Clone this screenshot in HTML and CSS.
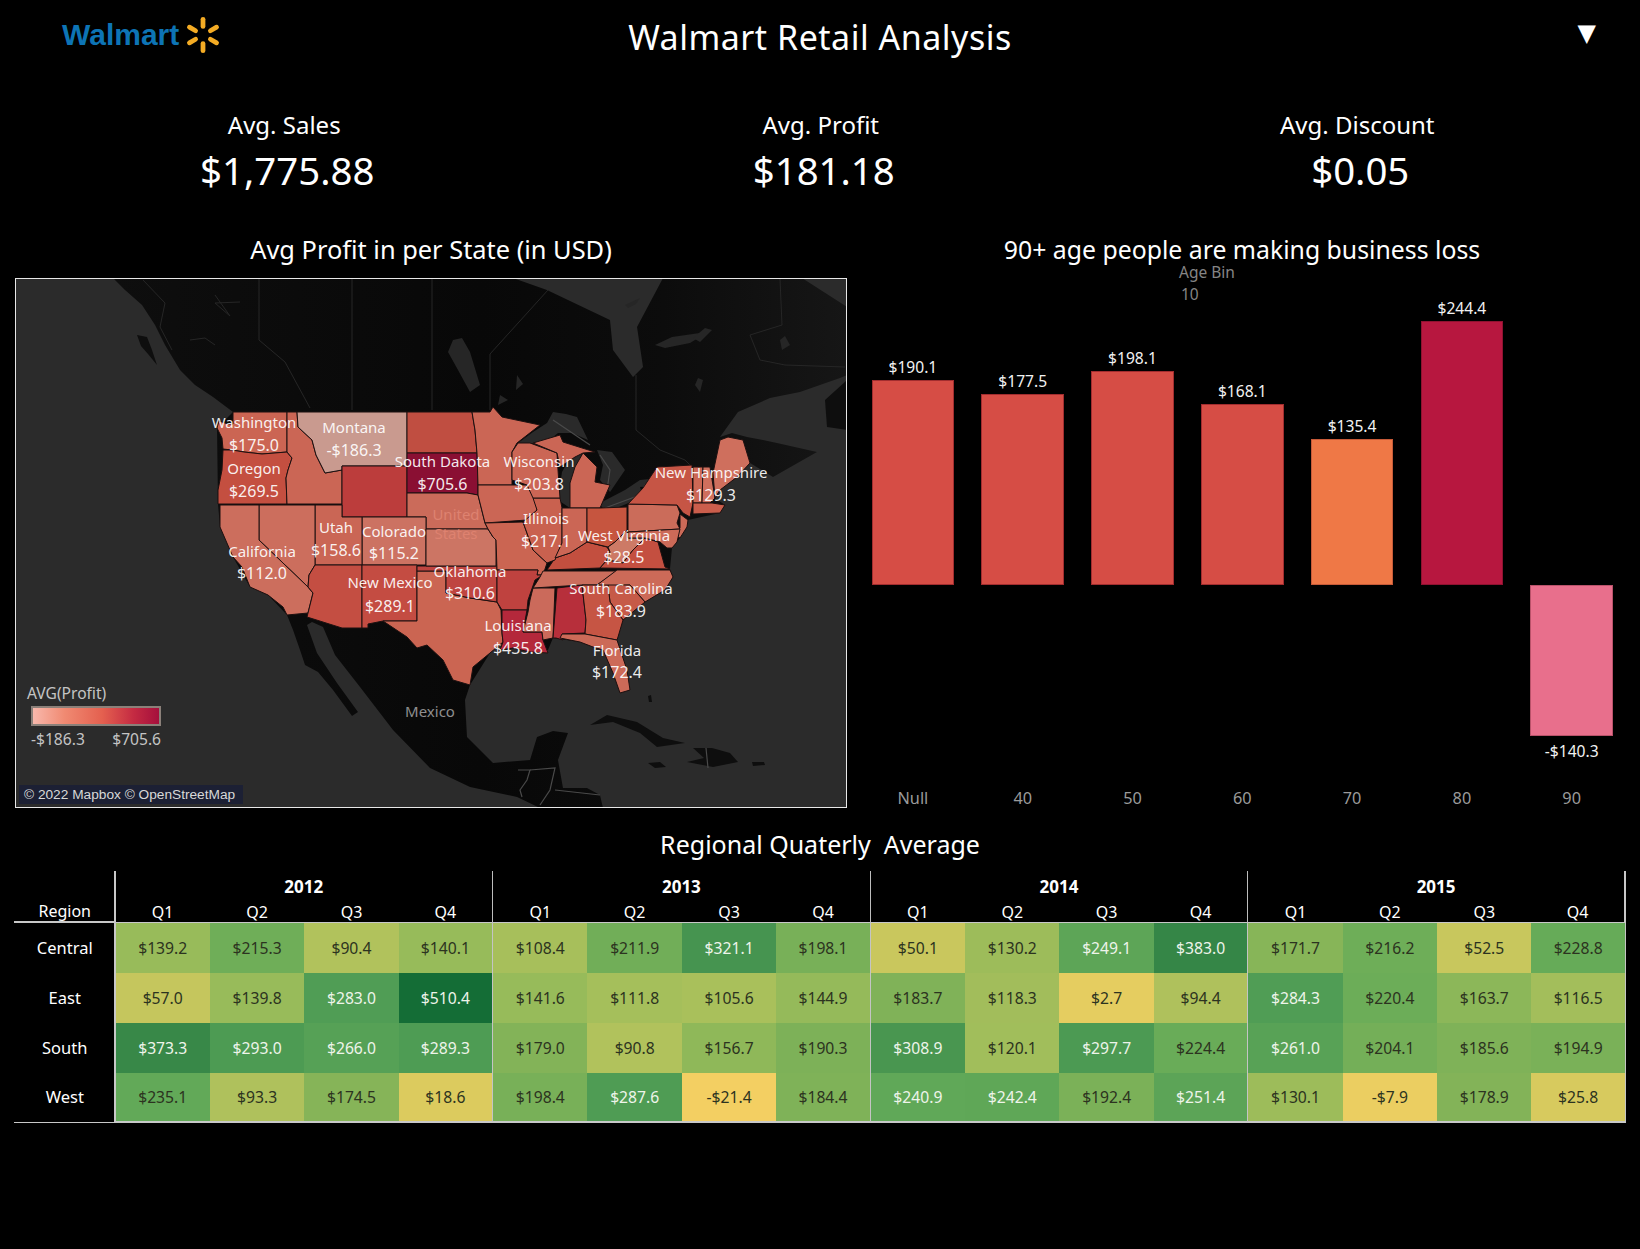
FILE: index.html
```html
<!DOCTYPE html>
<html lang="en">
<head>
<meta charset="utf-8">
<title>Walmart Retail Analysis</title>
<link rel="stylesheet" href="styles.css">
</head>
<body>
<div class="page">
  <header class="top">
    <div class="logo">
      <span class="logo-word">Walmart</span>
      <svg class="spark" viewBox="-20 -20 40 40" aria-hidden="true">
        <g fill="#f3ab24">
          <rect x="-2.5" y="-19" width="5" height="12.5" rx="2.5"/>
          <rect x="-2.5" y="-19" width="5" height="12.5" rx="2.5" transform="rotate(60)"/>
          <rect x="-2.5" y="-19" width="5" height="12.5" rx="2.5" transform="rotate(120)"/>
          <rect x="-2.5" y="-19" width="5" height="12.5" rx="2.5" transform="rotate(180)"/>
          <rect x="-2.5" y="-19" width="5" height="12.5" rx="2.5" transform="rotate(240)"/>
          <rect x="-2.5" y="-19" width="5" height="12.5" rx="2.5" transform="rotate(300)"/>
        </g>
      </svg>
    </div>
    <h1 class="main-title">Walmart Retail Analysis</h1>
    <div class="menu-arrow">▼</div>
  </header>

  <section class="kpis">
    <div class="kpi"><div class="kpi-label">Avg. Sales</div><div class="kpi-value">$1,775.88</div></div>
    <div class="kpi"><div class="kpi-label">Avg. Profit</div><div class="kpi-value">$181.18</div></div>
    <div class="kpi"><div class="kpi-label">Avg. Discount</div><div class="kpi-value">$0.05</div></div>
  </section>

  <section class="mid">
    <div class="map-panel">
      <h2 class="panel-title map-title">Avg Profit in per State (in USD)</h2>
      <div class="map">
        <svg class="map-svg" viewBox="16 279 830 528" preserveAspectRatio="none" aria-label="Map of average profit per US state">
          <defs>
            <linearGradient id="landShade" x1="0" y1="0" x2="1" y2="0">
              <stop offset="0" stop-color="#0e0e0e"/>
              <stop offset="0.5" stop-color="#080808"/>
              <stop offset="0.75" stop-color="#0c0c0c"/>
              <stop offset="1" stop-color="#161616"/>
            </linearGradient>
          </defs>
          <rect x="16" y="279" width="830" height="528" fill="#2b2b2b"/>
          <!-- land -->
          <path fill="url(#landShade)" d="M113,278 L125,290 L142,305 L155,325 L165,345 L180,370 L195,385 L213,397 L233,412 L217,428 L218,504 L220,527 L233,557 L250,587 L268,595 L287,615 L293,630 L300,650 L305,665 L318,672 L333,690 L352,716 L358,712 L337,683 L317,653 L307,625 L312,622 L323,627 L335,655 L360,687 L393,730 L430,768 L470,787 L517,797 L540,808 L603,808 L600,795 L587,788 L563,788 L558,760 L568,733 L553,731 L537,737 L530,760 L493,763 L467,737 L465,700 L470,685 L490,653 L503,642 L530,650 L548,650 L553,638 L580,642 L593,647 L603,650 L613,673 L620,693 L630,690 L627,670 L617,640 L623,620 L645,602 L665,590 L673,577 L670,569 L672,548 L680,538 L688,520 L720,513 L725,505 L715,498 L720,490 L737,477 L750,463 L773,477 L817,452 L777,443 L763,440 L747,437 L732,433 L720,437 L738,412 L770,398 L800,392 L840,378 L847,375 L847,307 L802,278 L663,278 L637,327 L643,367 L633,377 L613,350 L610,320 L547,290 L513,278 Z"/>
          <path class="land-bit" d="M137,335 L147,337 L152,350 L157,365 L148,354 L141,346 Z"/>
          <path class="land-bit" d="M847,380 L825,400 L827,427 L847,430 Z"/>
          <path class="land-bit" d="M590,725 L607,715 L637,722 L663,738 L685,743 L657,747 L640,733 L613,722 Z"/>
          <path class="land-bit" d="M693,748 L712,748 L730,753 L738,762 L713,767 L687,762 L704,758 Z"/>
          <path class="land-bit" d="M648,763 L660,762 L666,767 L655,768 Z"/>
          <path class="land-bit" d="M752,762 L764,762 L765,765 L753,766 Z"/>
          <path class="land-bit" d="M648,696 L651,695 L652,702 L649,702 Z"/>
          <!-- lakes -->
          <g fill="#2a2a2a">
            <path d="M518,443 L533,432 L547,423 L553,412 L566,414 L577,417 L588,440 L572,433 L558,433 L543,445 L533,443 Z"/>
            <path d="M558,500 L570,508 L575,493 L573,473 L585,455 L573,452 L562,472 Z"/>
            <path d="M597,450 L612,452 L625,470 L610,492 L600,480 L603,465 Z"/>
            <path d="M600,505 L607,512 L643,497 L640,487 L667,485 L668,477 L640,480 L625,490 L600,503 Z"/>
          </g>
          <g fill="#262626">
            <path d="M453,340 L462,338 L470,352 L480,385 L470,392 L458,370 L448,352 Z"/>
            <path d="M655,345 L672,337 L700,333 L708,332 L690,343 L665,348 Z"/>
            <path d="M625,305 L640,298 L636,304 L628,308 Z"/>
            <path d="M693,338 L705,328 L712,330 L700,342 Z"/>
            <path d="M695,385 L698,378 L703,380 L700,392 Z"/>
            <path d="M780,340 L785,336 L790,345 L782,350 Z"/>
            <path d="M517,375 L523,384 L516,390 Z"/>
            <path d="M500,395 L508,400 L498,405 Z"/>
          </g>
          <!-- faint political and river lines -->
          <g class="faint">
            <path d="M259,279 L259,340 L285,362 L310,408"/>
            <path d="M352,279 L352,410"/>
            <path d="M432,279 L432,410"/>
            <path d="M490,410 L490,354 L548,290"/>
            <path d="M636,375 L636,430 L660,450 L685,460 L690,465"/>
            <path d="M780,279 L782,325 L750,335 L760,360 L785,365 L845,367"/>
            <path d="M215,295 L230,316 L215,303 L240,302"/>
            <path d="M190,340 L205,338 L215,345"/>
            <path d="M143,280 L165,303 L160,327 L172,350"/>
          </g>
          <g class="bright-line">
            <path d="M553,420 L590,445"/>
            <path d="M600,455 L610,470 L607,490"/>
            <path d="M605,508 L640,495 L645,485 L665,480"/>
            <path d="M518,770 L530,770 L527,780 L520,790 L522,797"/>
            <path d="M530,770 L555,768 L550,790 L540,805"/>
            <path d="M555,790 L600,795"/>
            <path d="M706,748 L708,768"/>
          </g>

          <!-- states -->
          <g class="states">
            <path fill="#cb6553" d="M233,412 L287,412 L287,452 L262,454 L244,452 L232,450 L223,449 L222,438 L217,428 L219,421 L228,424 L233,424 Z"/>
            <path fill="#c44f40" d="M223,450 L232,450 L244,452 L262,454 L287,452 L292,458 L288,470 L286,478 L287,504 L218,504 L218,490 L222,470 Z"/>
            <path fill="#cb6655" d="M287,412 L297,412 L298,427 L312,440 L316,455 L325,473 L342,470 L342,504 L287,504 L286,478 L288,470 L292,458 L287,452 Z"/>
            <path fill="#c99a8f" d="M297,412 L407,412 L407,466 L342,466 L342,470 L325,473 L316,455 L312,440 L298,427 Z"/>
            <path fill="#bc3d3c" d="M342,466 L407,466 L407,517 L342,517 Z"/>
            <path fill="#c04e41" d="M407,412 L472,412 L475,430 L477,453 L407,453 Z"/>
            <path fill="#8a0f33" d="M407,453 L477,453 L478,480 L478,495 L467,493 L407,493 Z"/>
            <path fill="#cb6b5a" d="M407,493 L467,493 L478,495 L480,503 L485,523 L488,529 L426,529 L426,517 L407,517 Z"/>
            <path fill="#cc7262" d="M362,517 L426,517 L426,565 L362,565 Z"/>
            <path fill="#ca6655" d="M315,505 L342,505 L342,517 L362,517 L362,565 L315,565 Z"/>
            <path fill="#cc6e5d" d="M259,505 L315,505 L315,565 L309,575 L308,587 L259,540 Z"/>
            <path fill="#cc6e5d" d="M220,505 L259,505 L259,540 L308,587 L313,593 L310,605 L308,613 L287,615 L283,607 L268,595 L250,587 L242,567 L233,557 L220,527 L220,513 Z"/>
            <path fill="#c44e42" d="M315,565 L362,565 L362,628 L342,628 L307,617 L308,613 L310,605 L313,593 L308,587 L309,575 Z"/>
            <path fill="#c44c42" d="M362,565 L417,565 L417,621 L383,621 L368,624 L368,628 L362,628 Z"/>
            <path fill="#cb6552" d="M417,571 L446,571 L446,593 L470,598 L497,602 L501,610 L502,633 L503,642 L490,653 L473,667 L470,685 L453,680 L443,660 L427,645 L417,648 L407,637 L383,621 L417,621 Z"/>
            <path fill="#bf4540" d="M417,566 L497,566 L497,602 L470,598 L446,593 L446,571 L417,571 Z"/>
            <path fill="#cc7564" d="M426,529 L488,529 L493,537 L496,540 L496,566 L426,566 Z"/>
            <path fill="#cb6655" d="M472,412 L490,412 L493,407 L502,417 L540,425 L517,443 L512,452 L512,467 L512,485 L478,485 L477,453 L475,430 Z"/>
            <path fill="#cb6655" d="M478,485 L527,485 L535,498 L537,510 L527,520 L485,523 L480,503 L478,495 Z"/>
            <path fill="#cb6552" d="M485,523 L523,522 L533,550 L547,563 L543,575 L537,575 L538,570 L497,570 L496,540 L493,537 L488,529 Z"/>
            <path fill="#bf423f" d="M497,570 L538,570 L537,575 L543,575 L535,580 L528,600 L527,610 L502,610 L497,602 Z"/>
            <path fill="#b4283b" d="M502,610 L527,610 L523,632 L542,632 L543,640 L548,653 L530,652 L513,648 L500,650 L503,642 L502,633 Z"/>
            <path fill="#cb6a5b" d="M533,588 L555,588 L553,638 L543,640 L542,632 L523,632 L528,612 L530,600 Z"/>
            <path fill="#b72f3b" d="M557,588 L582,585 L586,620 L585,633 L562,634 L563,640 L556,638 L553,638 Z"/>
            <path fill="#cb6e5d" d="M543,571 L617,571 L597,585 L582,585 L533,588 L540,577 Z"/>
            <path fill="#c34f3f" d="M547,570 L555,558 L570,553 L587,542 L607,547 L610,552 L607,560 L600,568 Z"/>
            <path fill="#c9614f" d="M533,498 L560,498 L562,508 L562,543 L555,560 L547,563 L533,550 L523,522 L537,510 Z"/>
            <path fill="#cb6655" d="M518,443 L530,443 L557,453 L558,470 L560,498 L533,498 L527,485 L512,480 L512,452 Z"/>
            <path fill="#cb6655" d="M570,508 L600,508 L610,485 L595,482 L597,467 L583,453 L575,467 L570,483 Z"/>
            <path fill="#cb6655" d="M533,443 L560,435 L563,442 L595,452 L583,453 L575,457 L560,467 L557,453 Z"/>
            <path fill="#cb6655" d="M562,508 L587,508 L587,542 L570,553 L555,558 L562,543 Z"/>
            <path fill="#c6553f" d="M587,508 L600,508 L627,507 L627,530 L615,542 L608,547 L587,542 Z"/>
            <path fill="#cb6c5a" d="M628,504 L677,505 L680,513 L677,523 L680,529 L628,532 Z"/>
            <path fill="#c65545" d="M628,504 L643,488 L657,467 L692,465 L693,503 L690,517 L683,513 L677,505 Z"/>
            <path fill="#cc6855" d="M693,467 L703,467 L702,503 L693,503 Z"/>
            <path fill="#cf6f5d" d="M703,467 L710,467 L715,498 L710,503 L702,503 Z"/>
            <path fill="#cf6f5d" d="M713,473 L720,440 L728,437 L743,440 L750,463 L737,477 L720,490 L715,498 Z"/>
            <path fill="#cb5e4c" d="M693,503 L712,503 L725,505 L720,513 L693,514 Z"/>
            <path fill="#cc6a58" d="M680,514 L688,520 L687,527 L680,538 L675,535 L680,528 Z"/>
            <path fill="#cd7a66" d="M627,530 L628,538 L645,538 L633,550 L623,563 L607,560 L610,552 L608,547 L615,542 Z"/>
            <path fill="#c44f40" d="M600,568 L607,560 L623,563 L633,550 L645,538 L658,542 L665,567 L670,569 Z"/>
            <path fill="#cc6a58" d="M628,532 L680,529 L677,542 L672,548 L667,548 L660,542 L645,538 L628,538 Z"/>
            <path fill="#cc6a58" d="M617,570 L670,570 L673,577 L665,590 L645,602 L630,585 L608,586 L597,585 Z"/>
            <path fill="#c65a48" d="M608,585 L630,585 L645,602 L623,620 L610,602 Z"/>
            <path fill="#c65544" d="M582,585 L608,585 L610,602 L623,620 L618,637 L617,640 L585,634 L586,620 Z"/>
            <path fill="#cc6a58" d="M562,634 L585,634 L617,640 L627,670 L630,690 L620,693 L613,673 L603,650 L593,647 L580,642 L560,638 Z"/>
          </g>

          <!-- labels -->
          <g class="state-labels">
            <text x="254" y="428">Washington</text><text class="val" x="254" y="451">$175.0</text>
            <text x="354" y="433">Montana</text><text class="val" x="354" y="456">-$186.3</text>
            <text x="254" y="474">Oregon</text><text class="val" x="254" y="497">$269.5</text>
            <text x="442.5" y="467">South Dakota</text><text class="val" x="442.5" y="490">$705.6</text>
            <text x="539" y="467">Wisconsin</text><text class="val" x="539" y="490">$203.8</text>
            <text x="711" y="478">New Hampshire</text><text class="val" x="711" y="501">$129.3</text>
            <text x="336" y="533">Utah</text><text class="val" x="336" y="556">$158.6</text>
            <text x="394" y="537">Colorado</text><text class="val" x="394" y="559">$115.2</text>
            <text x="546" y="524">Illinois</text><text class="val" x="546" y="547">$217.1</text>
            <text x="624" y="541">West Virginia</text><text class="val" x="624" y="563">$28.5</text>
            <text x="262" y="557">California</text><text class="val" x="262" y="579">$112.0</text>
            <text x="390" y="588">New Mexico</text><text class="val" x="390" y="612">$289.1</text>
            <text x="470" y="577">Oklahoma</text><text class="val" x="470" y="599">$310.6</text>
            <text x="621" y="594">South Carolina</text><text class="val" x="621" y="617">$183.9</text>
            <text x="518" y="631">Louisiana</text><text class="val" x="518" y="654">$435.8</text>
            <text x="617" y="656">Florida</text><text class="val" x="617" y="678">$172.4</text>
          </g>
          <g class="country-labels">
            <text class="us-label" x="456" y="520">United</text>
            <text class="us-label" x="456" y="539">States</text>
            <text class="mx-label" x="430" y="717">Mexico</text>
          </g>
        </svg>
        <div class="legend">
          <div class="legend-title">AVG(Profit)</div>
          <div class="legend-bar"></div>
          <div class="legend-scale"><span>-$186.3</span><span>$705.6</span></div>
        </div>
        <div class="attribution">© 2022 Mapbox © OpenStreetMap</div>
      </div>
    </div>

    <div class="bar-panel">
      <h2 class="panel-title bar-title">90+ age people are making business loss</h2>
      <div class="age-head"><div>Age Bin</div><div class="age-value">10</div></div>
      <div class="bars">
        <div class="bar-col">
          <div class="bar-up"><span class="bar-value">$190.1</span><div class="bar bar-red" style="height:205px"></div></div>
          <div class="bar-down"></div>
          <div class="bar-axis">Null</div>
        </div>
        <div class="bar-col">
          <div class="bar-up"><span class="bar-value">$177.5</span><div class="bar bar-red" style="height:191px"></div></div>
          <div class="bar-down"></div>
          <div class="bar-axis">40</div>
        </div>
        <div class="bar-col">
          <div class="bar-up"><span class="bar-value">$198.1</span><div class="bar bar-red" style="height:214px"></div></div>
          <div class="bar-down"></div>
          <div class="bar-axis">50</div>
        </div>
        <div class="bar-col">
          <div class="bar-up"><span class="bar-value">$168.1</span><div class="bar bar-red" style="height:181.5px"></div></div>
          <div class="bar-down"></div>
          <div class="bar-axis">60</div>
        </div>
        <div class="bar-col">
          <div class="bar-up"><span class="bar-value">$135.4</span><div class="bar bar-orange" style="height:146.2px"></div></div>
          <div class="bar-down"></div>
          <div class="bar-axis">70</div>
        </div>
        <div class="bar-col">
          <div class="bar-up"><span class="bar-value">$244.4</span><div class="bar bar-crimson" style="height:264px"></div></div>
          <div class="bar-down"></div>
          <div class="bar-axis">80</div>
        </div>
        <div class="bar-col">
          <div class="bar-up"></div>
          <div class="bar-down"><div class="bar bar-pink" style="height:150.6px"></div><span class="bar-value bar-value-neg">-$140.3</span></div>
          <div class="bar-axis">90</div>
        </div>
      </div>
    </div>
  </section>

  <h2 class="table-title">Regional Quaterly  Average</h2>

  <div class="table-wrap">
  <table class="heat">
    <colgroup><col class="col-region"><col span="16" class="col-q"></colgroup>
    <thead>
      <tr class="year-row">
        <th class="head-blank"></th>
        <th colspan="4" class="year">2012</th><th colspan="4" class="year">2013</th><th colspan="4" class="year">2014</th><th colspan="4" class="year">2015</th>
      </tr>
      <tr class="q-row">
        <th class="region-head">Region</th>
        <th>Q1</th><th>Q2</th><th>Q3</th><th class="q4">Q4</th>
        <th>Q1</th><th>Q2</th><th>Q3</th><th class="q4">Q4</th>
        <th>Q1</th><th>Q2</th><th>Q3</th><th class="q4">Q4</th>
        <th>Q1</th><th>Q2</th><th>Q3</th><th class="q4">Q4</th>
      </tr>
    </thead>
    <tbody>
      <tr>
        <th class="region">Central</th>
        <td style="background:#98bb5a">$139.2</td><td style="background:#6fae58">$215.3</td><td style="background:#b1c25c">$90.4</td><td class="q4" style="background:#97bb5a">$140.1</td>
        <td style="background:#a7bf5b">$108.4</td><td style="background:#71ae58">$211.9</td><td class="lt" style="background:#469450">$321.1</td><td class="q4" style="background:#78b058">$198.1</td>
        <td style="background:#c9c75d">$50.1</td><td style="background:#9dbc5a">$130.2</td><td class="lt" style="background:#5da557">$249.1</td><td class="q4 lt" style="background:#358647">$383.0</td>
        <td style="background:#87b558">$171.7</td><td style="background:#6eae58">$216.2</td><td style="background:#c8c75d">$52.5</td><td class="q4" style="background:#66ab58">$228.8</td>
      </tr>
      <tr>
        <th class="region">East</th>
        <td style="background:#c5c65d">$57.0</td><td style="background:#98bb5a">$139.8</td><td class="lt" style="background:#509d55">$283.0</td><td class="q4 lt" style="background:#146d36">$510.4</td>
        <td style="background:#97bb5a">$141.6</td><td style="background:#a5bf5b">$111.8</td><td style="background:#a9c05b">$105.6</td><td class="q4" style="background:#95ba5a">$144.9</td>
        <td style="background:#80b258">$183.7</td><td style="background:#a2bd5b">$118.3</td><td style="background:#e5cd60">$2.7</td><td class="q4" style="background:#afc15c">$94.4</td>
        <td class="lt" style="background:#509d55">$284.3</td><td style="background:#6cad58">$220.4</td><td style="background:#8cb759">$163.7</td><td class="q4" style="background:#a3be5b">$116.5</td>
      </tr>
      <tr>
        <th class="region">South</th>
        <td class="lt" style="background:#388848">$373.3</td><td class="lt" style="background:#4d9b53">$293.0</td><td class="lt" style="background:#56a156">$266.0</td><td class="q4 lt" style="background:#4e9c54">$289.3</td>
        <td style="background:#83b358">$179.0</td><td style="background:#b1c25c">$90.8</td><td style="background:#8fb859">$156.7</td><td class="q4" style="background:#7db158">$190.3</td>
        <td class="lt" style="background:#499650">$308.9</td><td style="background:#a1be5b">$120.1</td><td class="lt" style="background:#4c9a53">$297.7</td><td class="q4" style="background:#69ac58">$224.4</td>
        <td class="lt" style="background:#58a256">$261.0</td><td style="background:#74af58">$204.1</td><td style="background:#7fb258">$185.6</td><td class="q4" style="background:#7ab158">$194.9</td>
      </tr>
      <tr>
        <th class="region">West</th>
        <td style="background:#62a958">$235.1</td><td style="background:#afc15c">$93.3</td><td style="background:#86b458">$174.5</td><td class="q4" style="background:#dccb5e">$18.6</td>
        <td style="background:#78b058">$198.4</td><td class="lt" style="background:#4f9c54">$287.6</td><td style="background:#f3cf62">-$21.4</td><td class="q4" style="background:#7fb258">$184.4</td>
        <td class="lt" style="background:#60a858">$240.9</td><td class="lt" style="background:#5fa757">$242.4</td><td style="background:#7bb158">$192.4</td><td class="q4 lt" style="background:#5ca457">$251.4</td>
        <td style="background:#9dbc5a">$130.1</td><td style="background:#ebce61">-$7.9</td><td style="background:#83b358">$178.9</td><td class="q4" style="background:#d7ca5e">$25.8</td>
      </tr>
    </tbody>
  </table>
  </div>
</div>
</body>
</html>
```
FILE: styles.css
```css
* { box-sizing: border-box; }
html, body { margin: 0; padding: 0; background: #000; }
body { font-family: "Noto Sans", "Open Sans", sans-serif; color: #fff; }
.page { width: 1640px; height: 1249px; background: #000; overflow: hidden; }

/* header */
.top { display: grid; grid-template-columns: 1fr auto 1fr; align-items: center; height: 74px; }
.logo { display: flex; align-items: center; gap: 5px; padding-left: 62px; height: 70px; margin-bottom: 4px; }
.logo-word { font-family: "Liberation Sans", Arial, sans-serif; font-weight: 700; font-size: 30px; color: #0d74b5; line-height: 36px; }
.spark { width: 38px; height: 38px; display: block; }
.main-title { margin: 0; font-size: 34px; font-weight: 400; line-height: 40px; letter-spacing: 0.5px; }
.menu-arrow { justify-self: end; padding-right: 44px; font-family: "DejaVu Sans", sans-serif; font-size: 24px; line-height: 30px; margin-bottom: 8px; }

/* KPI */
.kpis { display: grid; grid-template-columns: repeat(3, 536.5px); padding: 33px 0 0 16px; }
.kpi { display: flex; flex-direction: column; align-items: center; }
.kpi-label { font-size: 24px; line-height: 36px; }
.kpi-value { font-size: 38.4px; line-height: 56px; padding-left: 6px; margin-top: -1px; }

/* mid row */
.mid { display: flex; gap: 11px; padding-left: 15px; margin-top: 34px; height: 576px; }
.map-panel { width: 832px; display: flex; flex-direction: column; }
.panel-title { margin: 0; font-size: 24.8px; font-weight: 400; line-height: 34px; text-align: center; white-space: pre; }
.map-title { font-size: 25.4px; }
.map { position: relative; width: 832px; height: 530px; margin-top: 12px; border: 1px solid #e8e8e8; background: #2b2b2b; }
.map-svg { display: block; width: 830px; height: 528px; }
.states path { stroke: #1d1010; stroke-width: 1; stroke-linejoin: round; }
.land-bit { fill: #0e0e0e; }
.faint path { fill: none; stroke: #262626; stroke-width: 1; }
.bright-line path { fill: none; stroke: #4a4a4a; stroke-width: 1.2; }
.state-labels text { font-size: 15px; fill: #fff; fill-opacity: 0.92; text-anchor: middle; }
.state-labels .val { font-size: 16px; }
.country-labels text { font-size: 15px; text-anchor: middle; }
.us-label { fill: #de8270; }
.mx-label { fill: #8f8f8f; }

.legend { position: absolute; left: 11px; top: 404px; width: 140px; color: #c4c4c4; font-size: 15.6px; }
.legend-title { line-height: 20px; }
.legend-bar { width: 130px; height: 20px; margin: 3px 0 0 4px; border: 2px solid #8b8079; background: linear-gradient(90deg, #f8b8ac 0%, #f08a72 25%, #e4604f 55%, #c42a42 80%, #a50f3c 100%); }
.legend-scale { display: flex; justify-content: space-between; width: 130px; margin: 2px 0 0 4px; line-height: 22px; }

.attribution { position: absolute; left: 3px; top: 506px; width: 224px; height: 19px; padding-left: 5px; background: #1c2034; color: #d8d8d8; font-family: "Liberation Sans", Arial, sans-serif; font-size: 13.7px; line-height: 19px; white-space: nowrap; }

/* bars */
.bar-panel { width: 768px; display: flex; flex-direction: column; }
.bar-title { height: 29px; }
.age-head { height: 37px; padding-left: 321px; font-size: 15.5px; line-height: 22px; color: #858585; }
.age-value { padding-left: 2px; }
.bars { display: flex; }
.bar-col { flex: 0 0 109.8px; display: flex; flex-direction: column; align-items: center; }
.bar-up { height: 287px; display: flex; flex-direction: column; justify-content: flex-end; align-items: center; }
.bar-down { height: 203px; display: flex; flex-direction: column; align-items: center; }
.bar { width: 82.5px; border: 1px solid rgba(120, 20, 30, 0.55); }
.bar-red { background: #d64d45; }
.bar-orange { background: #ef7846; border-color: #c65a38; }
.bar-crimson { background: #b7173f; border-color: #8e1230; }
.bar-pink { background: #e86f8c; border-color: #b9526a; }
.bar-value { font-size: 15.6px; line-height: 20px; margin-bottom: 3px; color: #f2f2f2; }
.bar-value-neg { margin: 5px 0 0; }
.bar-axis { font-size: 16.3px; line-height: 20px; color: #9a9a9a; }

/* table */
.table-title { margin: 19px 0 10px; font-size: 25px; font-weight: 400; line-height: 34px; text-align: center; white-space: pre; }
.table-wrap { padding-left: 14px; }
.heat { table-layout: fixed; width: 1611.9px; border-collapse: separate; border-spacing: 0; }
.col-region { width: 101.5px; }
.col-q { width: 94.4px; }
.heat th, .heat td { padding: 0; text-align: center; font-weight: 400; }
.year-row th { height: 30px; vertical-align: middle; }
.year { font-size: 17px; font-weight: 700 !important; border-right: 1px solid #bdbdbd; }
.year-row .year:last-child, .q-row .q4:last-child, tbody .q4:last-child { border-right: 2px solid #c8c8c8; }
.head-blank { border-right: 2px solid #c8c8c8; }
.q-row th { height: 21px; font-size: 16px; line-height: 20px; border-bottom: 1px solid #c8c8c8; }
.q-row .q4 { border-right: 1px solid #bdbdbd; }
.q-row .region-head { border-bottom: 2px solid #c8c8c8; border-right: 2px solid #c8c8c8; padding-left: 2px; }
.heat tbody tr { height: 50px; }
.heat td { font-size: 15.7px; color: #2c3320; }
.heat td.lt { color: #eef4ea; }
.heat td.q4 { border-right: 1px solid #c4c4c4; }
.region { font-size: 16.5px; border-right: 2px solid #c8c8c8; padding: 0 0 2px 2px !important; }
.heat tbody tr:last-child th { border-bottom: 1px solid #c8c8c8; }
.heat tbody tr:last-child td { border-bottom: 2px solid #c8c8c8; }
```
